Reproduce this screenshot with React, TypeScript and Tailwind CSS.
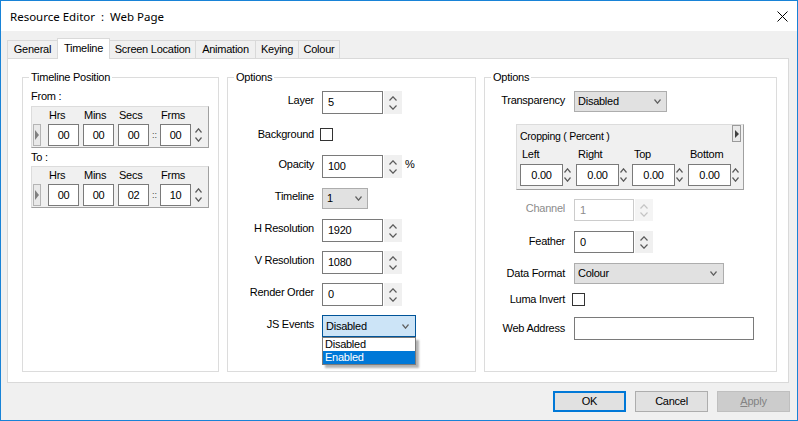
import React from 'react';

function Chev({ up, c = '#5a5a5a', w = 8 }: { up?: boolean; c?: string; w?: number }) {
  return (
    <svg width={w} height={5} viewBox={`0 0 ${w} 5`} className="block">
      <polyline
        points={up ? `0.5,4.5 ${w / 2},0.8 ${w - 0.5},4.5` : `0.5,0.5 ${w / 2},4.2 ${w - 0.5},0.5`}
        fill="none"
        stroke={c}
        strokeWidth="1.2"
      />
    </svg>
  );
}

function Spin({ className = '', c, w }: { className?: string; c?: string; w?: number }) {
  return (
    <div className={`flex flex-col items-center justify-between shrink-0 ${className}`}>
      <Chev up c={c} w={w} />
      <Chev c={c} w={w} />
    </div>
  );
}

function Check({ className = '' }: { className?: string }) {
  return <div className={`w-[13px] h-[13px] border border-[#333333] bg-white shrink-0 ${className}`} />;
}

function TimeBox({ v }: { v: string }) {
  return (
    <div className="w-[31px] h-[22px] bg-white border border-[#7a7a7a] flex items-center justify-center shrink-0">
      {v}
    </div>
  );
}

function TimePanel({ vals }: { vals: string[] }) {
  return (
    <div className="w-[178px] h-[42px] bg-[#f0f0f0] border border-[#dcdcdc] border-r-[#a0a0a0] border-b-[#a0a0a0] flex flex-col">
      {/* column headings */}
      <div className="flex h-[13px] mt-[2px] leading-[13px]">
        <span className="ml-[17px] w-[35px]">Hrs</span>
        <span className="w-[35px]">Mins</span>
        <span className="w-[42px]">Secs</span>
        <span>Frms</span>
      </div>
      <div className="flex items-center mt-[2px]">
        <div className="ml-px w-[8px] h-[22px] border border-[#b4b4b4] bg-[#e9e9e9] flex items-center justify-center shrink-0">
          <svg width="4" height="10" viewBox="0 0 4 10" className="block">
            <polygon points="0,0 4,5 0,10" fill="#808080" />
          </svg>
        </div>
        <div className="ml-[7px]">
          <TimeBox v={vals[0]} />
        </div>
        <div className="ml-[4px]">
          <TimeBox v={vals[1]} />
        </div>
        <div className="ml-[4px]">
          <TimeBox v={vals[2]} />
        </div>
        <span className="w-[11px] text-center text-[9px] tracking-normal text-[#444444]">::</span>
        <TimeBox v={vals[3]} />
        <Spin className="ml-[2px] w-[10px] h-[22px] py-[4px]" w={7} />
      </div>
    </div>
  );
}

function Row({ label, children, lift = true }: { label: string; children: React.ReactNode; lift?: boolean }) {
  return (
    <div className="flex items-center h-[32px]">
      <div className={`w-[86px] text-right shrink-0 ${lift ? 'pb-[3px]' : ''}`}>{label}</div>
      <div className="ml-[8px] flex items-center">{children}</div>
    </div>
  );
}

function NumInput({ v }: { v: string }) {
  return (
    <>
      <div className="w-[61px] h-[23px] border border-[#7a7a7a] bg-white pl-[5px] flex items-center">{v}</div>
      <Spin className="ml-px w-[18px] h-[23px] bg-[#f0f0f0] pt-[5px] pb-[4px]" />
    </>
  );
}

function CropCol({ label }: { label: string }) {
  return (
    <div className="w-[56px] flex flex-col shrink-0">
      <div className="h-[13px] leading-[13px] pl-[2px]">{label}</div>
      <div className="flex mt-[3px]">
        <div className="w-[43px] h-[22px] border border-[#7a7a7a] bg-white flex items-center justify-center">0.00</div>
        <Spin className="w-[9px] h-[22px] py-[4px]" w={7} />
      </div>
    </div>
  );
}

export default function App() {
  return (
    <div className="w-[798px] h-[421px] border border-[#1883d7] bg-[#f0f0f0] flex flex-col overflow-hidden font-['Liberation_Sans',Arial,sans-serif] text-[11px] leading-[13px] tracking-[-0.25px] text-black">
      {/* Title bar */}
      <div className="h-[30px] bg-white flex items-center justify-between pl-[9px] pr-[9px] shrink-0">
        <span className="font-['Noto_Sans',sans-serif] text-[11.5px] tracking-normal whitespace-pre">Resource Editor  :  Web Page</span>
        <svg width="11" height="11" viewBox="0 0 11 11" className="block">
          <path d="M0.5 0.5 L10.5 10.5 M10.5 0.5 L0.5 10.5" stroke="#000" strokeWidth="1" />
        </svg>
      </div>

      <div className="flex-1 flex flex-col pl-[6px] pr-[8px] pt-[7px]">
        {/* Tabs */}
        <div className="flex items-end h-[20px]">
          <div className="w-[50px] h-[18px] border-l border-t border-[#d9d9d9] bg-[#f0f0f0] flex items-center justify-center">General</div>
          <div className="relative z-10 -mb-px w-[53px] h-[21px] border-l border-r border-t border-[#d9d9d9] bg-white flex items-center justify-center pb-[2px]">Timeline</div>
          <div className="w-[85px] h-[18px] border-t border-[#d9d9d9] bg-[#f0f0f0] flex items-center justify-center">Screen Location</div>
          <div className="w-[60px] h-[18px] border-l border-t border-[#d9d9d9] bg-[#f0f0f0] flex items-center justify-center">Animation</div>
          <div className="w-[43px] h-[18px] border-l border-t border-[#d9d9d9] bg-[#f0f0f0] flex items-center justify-center">Keying</div>
          <div className="w-[42px] h-[18px] border-l border-r border-t border-[#d9d9d9] bg-[#f0f0f0] flex items-center justify-center">Colour</div>
        </div>

        {/* Tab page */}
        <div className="h-[325px] border border-[#d9d9d9] bg-white flex gap-[8px] pl-[14px] pt-[12px]">
          {/* Timeline Position */}
          <fieldset className="w-[197px] h-[301px] border border-[#dcdcdc] shrink-0">
            <legend className="ml-[6px] px-[2px] leading-[12px]">Timeline Position</legend>
            <div className="pl-[8px] flex flex-col">
              <div className="mt-[7px] leading-[13px]">From :</div>
              <div className="mt-[3px]">
                <TimePanel vals={['00', '00', '00', '00']} />
              </div>
              <div className="mt-[3px] leading-[13px]">To :</div>
              <div className="mt-[2px]">
                <TimePanel vals={['00', '00', '02', '10']} />
              </div>
            </div>
          </fieldset>

          {/* Options (middle) */}
          <fieldset className="w-[249px] h-[301px] border border-[#dcdcdc] shrink-0">
            <legend className="ml-[6px] px-[2px] leading-[12px]">Options</legend>
            <div className="pt-[3px]">
              <Row label="Layer">
                <NumInput v="5" />
              </Row>
              <Row label="Background" lift={false}>
                <Check className="-ml-[2px]" />
              </Row>
              <Row label="Opacity">
                <NumInput v="100" />
                <span className="ml-[3px] pb-[3px]">%</span>
              </Row>
              <Row label="Timeline">
                <div className="w-[46px] h-[21px] border border-[#adadad] bg-[#e1e1e1] flex items-center justify-between pl-[4px] pr-[5px]">
                  <span>1</span>
                  <Chev c="#606060" w={7} />
                </div>
              </Row>
              <Row label="H Resolution">
                <NumInput v="1920" />
              </Row>
              <Row label="V Resolution">
                <NumInput v="1080" />
              </Row>
              <Row label="Render Order">
                <NumInput v="0" />
              </Row>
              <Row label="JS Events">
                <div className="relative">
                  <div className="w-[94px] h-[22px] border border-[#005499] bg-[#cce4f7] flex items-center justify-between pl-[3px] pr-[6px]">
                    <span>Disabled</span>
                    <Chev c="#606060" w={7} />
                  </div>
                  {/* open drop-down list */}
                  <div className="absolute left-0 top-full w-[94px] border border-[#7a7a7a] bg-white shadow-[3px_3px_2px_rgba(0,0,0,0.3)] z-20">
                    <div className="h-[13px] leading-[13px] pl-[2px]">Disabled</div>
                    <div className="h-[13px] leading-[13px] pl-[2px] bg-[#0078d7] text-white">Enabled</div>
                  </div>
                </div>
              </Row>
            </div>
          </fieldset>

          {/* Options (right) */}
          <fieldset className="w-[293px] h-[301px] border border-[#dcdcdc] shrink-0">
            <legend className="ml-[6px] px-[2px] leading-[12px]">Options</legend>
            <div className="flex flex-col">
              <div className="flex items-center mt-[8px]">
                <div className="w-[80px] text-right pb-[3px] shrink-0">Transparency</div>
                <div className="ml-[9px] w-[93px] h-[21px] border border-[#adadad] bg-[#e1e1e1] flex items-center justify-between pl-[3px] pr-[5px]">
                  <span>Disabled</span>
                  <Chev c="#606060" w={7} />
                </div>
              </div>

              {/* Cropping panel */}
              <div className="ml-[31px] mt-[12px] w-[228px] h-[66px] bg-[#f0f0f0] border border-[#dcdcdc] border-r-[#a0a0a0] border-b-[#a0a0a0] flex flex-col pl-[3px]">
                <div className="flex justify-between h-[17px]">
                  <span className="pt-[5px] text-[10.5px] leading-[12px]">Cropping ( Percent )</span>
                  <div className="mr-[2px] w-[9px] h-[17px] border border-[#9a9a9a] bg-[#e9e9e9] flex items-center justify-center">
                    <svg width="4" height="8" viewBox="0 0 4 8" className="block">
                      <polygon points="0,0 4,4 0,8" fill="#404040" />
                    </svg>
                  </div>
                </div>
                <div className="flex mt-[6px]">
                  <CropCol label="Left" />
                  <CropCol label="Right" />
                  <CropCol label="Top" />
                  <CropCol label="Bottom" />
                </div>
              </div>

              <div className="flex items-center mt-[9px]">
                <div className="w-[80px] text-right pb-[3px] shrink-0 text-[#8c8c8c]">Channel</div>
                <div className="ml-[9px] w-[60px] h-[22px] border border-[#cccccc] bg-white pl-[5px] flex items-center text-[#8c8c8c]">1</div>
                <Spin className="ml-px w-[18px] h-[22px] bg-[#f4f4f4] pt-[5px] pb-[4px]" c="#c4c4c4" />
              </div>

              <div className="flex items-center mt-[10px]">
                <div className="w-[80px] text-right pb-[1px] shrink-0">Feather</div>
                <div className="ml-[9px] w-[60px] h-[22px] border border-[#7a7a7a] bg-white pl-[5px] flex items-center">0</div>
                <Spin className="ml-px w-[18px] h-[22px] bg-[#f0f0f0] pt-[5px] pb-[4px]" />
              </div>

              <div className="flex items-center mt-[10px]">
                <div className="w-[80px] text-right shrink-0">Data Format</div>
                <div className="ml-[9px] w-[150px] h-[21px] border border-[#adadad] bg-[#e1e1e1] flex items-center justify-between pl-[3px] pr-[6px]">
                  <span>Colour</span>
                  <Chev c="#606060" w={7} />
                </div>
              </div>

              <div className="flex items-center mt-[9px]">
                <div className="w-[80px] text-right shrink-0">Luma Invert</div>
                <Check className="ml-[7px]" />
              </div>

              <div className="flex items-center mt-[11px]">
                <div className="w-[80px] text-right shrink-0">Web Address</div>
                <div className="ml-[9px] w-[180px] h-[23px] border border-[#7a7a7a] bg-white" />
              </div>
            </div>
          </fieldset>
        </div>

        {/* Dialog buttons */}
        <div className="flex justify-end gap-[9px] mt-[8px] -mr-px">
          <div className="w-[73px] h-[21px] border-2 border-[#0078d7] bg-[#e1e1e1] flex items-center justify-center">OK</div>
          <div className="w-[73px] h-[21px] border border-[#adadad] bg-[#e1e1e1] flex items-center justify-center">Cancel</div>
          <div className="w-[73px] h-[21px] border border-[#bfbfbf] bg-[#cccccc] text-[#838383] flex items-center justify-center">
            <span>
              <span className="underline">A</span>pply
            </span>
          </div>
        </div>
      </div>
    </div>
  );
}
